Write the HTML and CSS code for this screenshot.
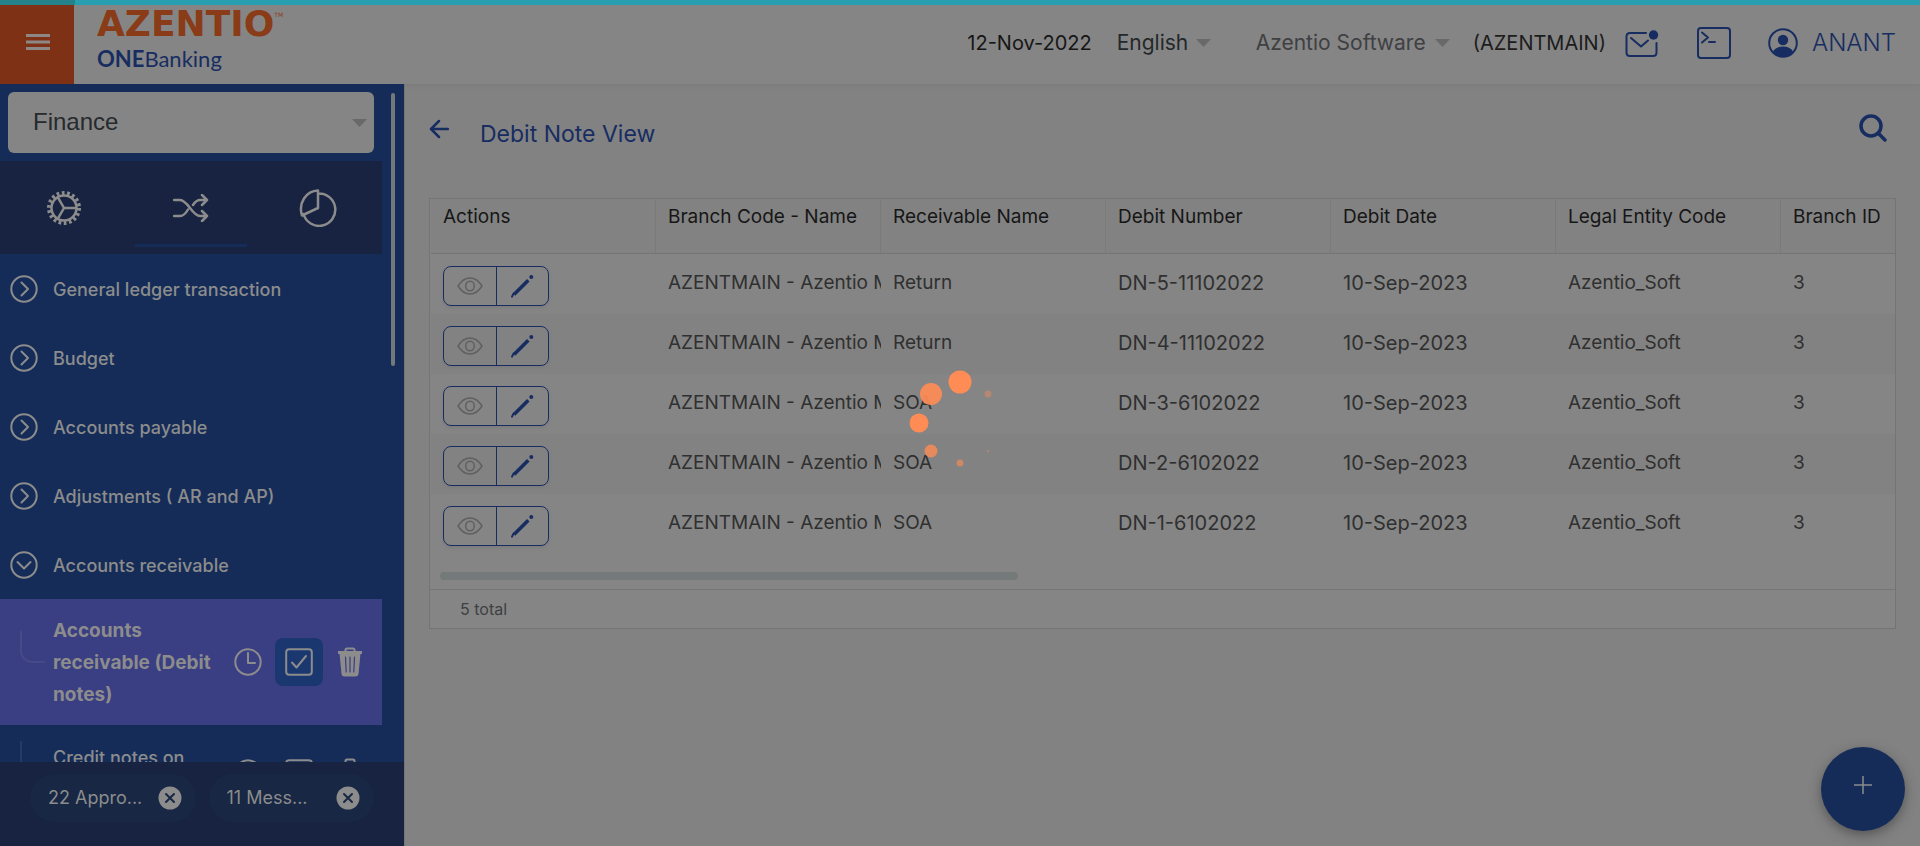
FILE: index.html
```html
<!DOCTYPE html>
<html lang="en">
<head>
<meta charset="utf-8">
<title>Debit Note View</title>
<link rel="stylesheet" href="styles.css">
</head>
<body>
<svg class="defs" aria-hidden="true">
  <symbol id="right" viewBox="0 0 28 28"><circle cx="14" cy="14" r="12.7"/><path d="M11.500 7.500l6.500 6.500-6.500 6.500"/></symbol>
  <symbol id="down" viewBox="0 0 28 28"><circle cx="14" cy="14" r="12.7"/><path d="M7.500 11l6.500 6.500 6.500-6.500"/></symbol>
  <symbol id="clock" viewBox="0 0 28 28"><circle cx="14" cy="14" r="12.7"/><path d="M14 5v10h7"/></symbol>
  <symbol id="check" viewBox="0 0 28 28"><rect x="1.200" y="1.200" width="25.600" height="25.600" rx="3"/><path d="M7 14.500l4.500 5L21 8"/></symbol>
  <symbol id="trash" viewBox="0 0 26 30"><path class="solid" d="M1 4h24v3H1zM2.500 6.500h21L21.500 27q-.3 2.500-3 2.500h-11q-2.700 0-3-2.500z"/><path d="M8.500 4.500V3q0-1.500 1.500-1.500h6q1.500 0 1.500 1.500v1.500"/><path class="slots" d="M8.500 10l.7 15M13 10v15M17.500 10l-.7 15"/></symbol>
  <symbol id="eye" viewBox="0 0 26 18"><path d="M1 9Q6 1 13 1t12 8q-5 8-12 8T1 9z"/><ellipse cx="13" cy="9" rx="4.300" ry="4.800"/></symbol>
  <symbol id="pen" viewBox="0 0 24 24"><path class="stem" d="M4 20.500L18.300 6.200"/><path d="M2 22.600l1.500-3"/><circle class="solid" cx="21.300" cy="2.900" r="2"/></symbol>
  <symbol id="close" viewBox="0 0 24 24"><circle class="solid" cx="12" cy="12" r="11.500"/><path class="cross" d="M8 8l8 8M16 8l-8 8"/></symbol>
</svg>

<header class="topbar">
  <button class="burger" aria-label="Menu"><svg width="24" height="18" viewBox="0 0 24 18"><path d="M0 2.500h24M0 9h24M0 15.500h24"/></svg></button>
  <div class="brand">
    <div class="brand-name">AZENTIO<span class="tm">TM</span></div>
    <div class="brand-sub"><b>ONE</b>Banking</div>
  </div>
  <div class="tools">
    <span class="date">12-Nov-2022</span>
    <select class="pick language" aria-label="Language"><option>English</option></select>
    <select class="pick company" aria-label="Company"><option>Azentio Software</option></select>
    <span class="branch">(AZENTMAIN)</span>
    <button class="icon-btn mail" aria-label="Messages"><svg width="34" height="28" viewBox="0 0 34 28"><path d="M21 3H5Q1.500 3 1.500 6.500v16Q1.500 26 5 26h23q3.500 0 3.500-3.500V13M6 8l10 8.500 7-6"/><circle class="solid" cx="28.500" cy="5" r="4.700"/></svg></button>
    <button class="icon-btn terminal" aria-label="Console"><svg width="34" height="32" viewBox="0 0 34 32"><rect x="1" y="1" width="32" height="30" rx="3"/><path d="M5 5.500l6 5-6 5M12 15h6"/></svg></button>
    <a class="user" href="#"><svg width="30" height="30" viewBox="0 0 30 30"><circle cx="15" cy="15" r="13.800"/><circle class="solid" cx="15" cy="12" r="5.200"/><path class="solid" d="M5 23.500q3-5 10-5t10 5q-4 5.300-10 5.300t-10-5.300z"/></svg>ANANT</a>
  </div>
</header>

<div class="body">
  <aside class="sidebar">
    <div class="scroll-area">
      <div class="menu">
        <div class="module-box"><select class="module" aria-label="Module"><option>Finance</option></select></div>
        <div class="tabs">
          <button class="tab" aria-label="Settings"><svg width="34" height="34" viewBox="0 0 34 34"><circle class="teeth" cx="17" cy="17" r="15"/><circle class="ring" cx="17" cy="17" r="12.500"/><path class="ring" d="M17 17h12M17 17L11 6.600M17 17L11 27.400"/></svg></button>
          <button class="tab active" aria-label="Transactions"><svg width="36" height="28" viewBox="0 0 36 28"><path d="M1 6h6c8 0 12 16 20 16h7M1 22h6c3.500 0 6-3 8-6.500M20 11c2-3 4-5 7-5h7M29 1l5 5-5 5M29 17l5 5-5 5"/></svg></button>
          <button class="tab" aria-label="Reports"><svg width="38" height="38" viewBox="0 0 38 38"><path d="M19 4.500A16.200 16.200 0 1 1 4.500 25M19 1.500V19L3 26.500C-1 14 7 2 19 1.500z"/></svg></button>
        </div>
        <nav>
          <a class="node" href="#"><svg class="mark"><use href="#right"/></svg><span>General ledger transaction</span></a>
          <a class="node" href="#"><svg class="mark"><use href="#right"/></svg><span>Budget</span></a>
          <a class="node" href="#"><svg class="mark"><use href="#right"/></svg><span>Accounts payable</span></a>
          <a class="node" href="#"><svg class="mark"><use href="#right"/></svg><span>Adjustments ( AR and AP)</span></a>
          <a class="node" href="#"><svg class="mark"><use href="#down"/></svg><span>Accounts receivable</span></a>
          <div class="leaf current">
            <span class="branch-line"></span>
            <a class="leaf-name" href="#">Accounts receivable (Debit notes)</a>
            <button class="act" aria-label="History"><svg class="mark"><use href="#clock"/></svg></button>
            <button class="act on" aria-label="Approve"><svg class="mark"><use href="#check"/></svg></button>
            <button class="act" aria-label="Delete"><svg class="bin"><use href="#trash"/></svg></button>
          </div>
          <div class="leaf">
            <span class="branch-line"></span>
            <a class="leaf-name" href="#">Credit notes on</a>
            <button class="act" aria-label="History"><svg class="mark"><use href="#clock"/></svg></button>
            <button class="act" aria-label="Approve"><svg class="mark"><use href="#check"/></svg></button>
            <button class="act" aria-label="Delete"><svg class="bin"><use href="#trash"/></svg></button>
          </div>
        </nav>
      </div>
      <span class="thumb"></span>
    </div>
    <div class="chips">
      <div class="chip"><span>22 Appro...</span><button aria-label="Dismiss approvals"><svg width="24" height="24"><use href="#close"/></svg></button></div>
      <div class="chip"><span>11 Mess...</span><button aria-label="Dismiss messages"><svg width="24" height="24"><use href="#close"/></svg></button></div>
    </div>
  </aside>

  <main class="content">
    <div class="heading">
      <button class="back" aria-label="Back"><svg width="20" height="20" viewBox="0 0 20 20"><path d="M19 10H2M10 2l-8 8 8 8"/></svg></button>
      <h1>Debit Note View</h1>
      <button class="search" aria-label="Search"><svg width="28" height="28" viewBox="0 0 28 28"><circle cx="12" cy="12" r="10"/><path d="M19.500 19.500l6.500 6.500"/></svg></button>
    </div>
    <section class="grid">
      <div class="grid-view">
        <table>
          <thead><tr><th>Actions</th><th>Branch Code - Name</th><th>Receivable Name</th><th>Debit Number</th><th>Debit Date</th><th>Legal Entity Code</th><th>Branch ID</th></tr></thead>
          <tbody>
            <tr><td><div class="pair"><button aria-label="View"><svg class="eye"><use href="#eye"/></svg></button><button aria-label="Edit"><svg class="pen"><use href="#pen"/></svg></button></div></td><td>AZENTMAIN - Azentio Main</td><td>Return</td><td class="num">DN-5-11102022</td><td class="num">10-Sep-2023</td><td>Azentio_Soft</td><td>3</td></tr>
            <tr><td><div class="pair"><button aria-label="View"><svg class="eye"><use href="#eye"/></svg></button><button aria-label="Edit"><svg class="pen"><use href="#pen"/></svg></button></div></td><td>AZENTMAIN - Azentio Main</td><td>Return</td><td class="num">DN-4-11102022</td><td class="num">10-Sep-2023</td><td>Azentio_Soft</td><td>3</td></tr>
            <tr><td><div class="pair"><button aria-label="View"><svg class="eye"><use href="#eye"/></svg></button><button aria-label="Edit"><svg class="pen"><use href="#pen"/></svg></button></div></td><td>AZENTMAIN - Azentio Main</td><td>SOA</td><td class="num">DN-3-6102022</td><td class="num">10-Sep-2023</td><td>Azentio_Soft</td><td>3</td></tr>
            <tr><td><div class="pair"><button aria-label="View"><svg class="eye"><use href="#eye"/></svg></button><button aria-label="Edit"><svg class="pen"><use href="#pen"/></svg></button></div></td><td>AZENTMAIN - Azentio Main</td><td>SOA</td><td class="num">DN-2-6102022</td><td class="num">10-Sep-2023</td><td>Azentio_Soft</td><td>3</td></tr>
            <tr><td><div class="pair"><button aria-label="View"><svg class="eye"><use href="#eye"/></svg></button><button aria-label="Edit"><svg class="pen"><use href="#pen"/></svg></button></div></td><td>AZENTMAIN - Azentio Main</td><td>SOA</td><td class="num">DN-1-6102022</td><td class="num">10-Sep-2023</td><td>Azentio_Soft</td><td>3</td></tr>
          </tbody>
        </table>
      </div>
      <div class="track"><div class="track-thumb"></div></div>
      <div class="total">5 total</div>
    </section>
  </main>
</div>

<button class="fab" aria-label="Add"><svg width="18" height="18" viewBox="0 0 18 18"><path d="M9 0v18M0 9h18"/></svg></button>
<div class="progress"><div class="progress-start"></div></div>
<div class="loading" role="status" aria-label="Loading">
  <svg width="106" height="106" viewBox="-53 -53 106 106"><circle cy="-41" r="11.500"/><circle cx="-29" cy="-29" r="11" opacity=".92"/><circle cx="-41" r="9.500"/><circle cx="-29" cy="28" r="6.500" opacity=".8"/><circle cy="40" r="3.500" opacity=".6"/><circle cx="28" cy="28" r="1" opacity=".5"/><circle cx="28" cy="-29" r="3.500" opacity=".4"/></svg>
</div>
</body>
</html>
```
FILE: styles.css
```css
* { box-sizing: border-box; }
html, body { height: 100%; }
body {
  margin: 0;
  display: flex;
  flex-direction: column;
  overflow: hidden;
  background: #828282;
  color: #1c1c1c;
  font: 20px/24px Inter, "Liberation Sans", sans-serif;
}
button, select { font: inherit; color: inherit; background: none; border: 0; padding: 0; margin: 0; }
button { display: flex; align-items: center; justify-content: center; }
a { color: inherit; text-decoration: none; }
svg { display: block; flex: none; fill: none; stroke: currentColor; stroke-width: 2; stroke-linecap: round; stroke-linejoin: round; }
.solid { fill: currentColor; stroke: none; }
.defs { position: absolute; width: 0; height: 0; }

/* top bar */
.topbar { flex: none; display: flex; height: 84px; background: #858585; box-shadow: 0 1px 4px #7b7b7b; }
.burger { width: 74px; padding-left: 2px; background: #7f3116; color: #8d8885; }
.burger svg { stroke-linecap: butt; stroke-width: 3; }
.brand { padding: 9px 0 0 23px; }
.brand-name { display: flex; font: 700 36px/30px "DejaVu Sans", sans-serif; color: #8a3b17; }
.tm { font-size: 6px; line-height: 12px; font-weight: 400; }
.brand-sub { font: 22px/32px Lato, sans-serif; color: #172d61; padding-top: 4px; }
.tools { flex: 1; display: flex; align-items: center; justify-content: flex-end; padding: 1px 24px 0 0; }
.pick, .module { appearance: none; background: url("data:image/svg+xml,%3Csvg xmlns='http://www.w3.org/2000/svg' width='15' height='8'%3E%3Cpath d='M0 0h15L7.500 8z' fill='%23696969'/%3E%3C/svg%3E") right center no-repeat; }
.pick { height: 32px; font-size: 21px; line-height: 32px; }
.date { color: #161616; }
.language { width: 94px; margin-left: 25px; color: #23282b; }
.company { width: 194px; margin-left: 45px; color: #3e4042; }
.branch { margin-left: 23px; }
.icon-btn, .user { color: #172d61; }
.mail { margin-left: 19px; padding-top: 2px; }
.terminal { margin-left: 38px; }
.user { display: flex; align-items: center; gap: 14px; margin-left: 37px; font-size: 24px; font-weight: 300; }

.body { flex: 1; min-height: 0; display: flex; }

/* sidebar */
.sidebar { flex: none; width: 405px; display: flex; flex-direction: column; background: #152c59; border-right: 1px solid #757575; color: #8c8c8c; font-size: 18px; }
.scroll-area { flex: 1; min-height: 0; display: flex; overflow: hidden; }
.menu { width: 382px; }
.thumb { width: 4px; height: 273px; margin: 9px 0 0 9px; border-radius: 2px; background: #747979; }
.module-box { padding: 8px; }
.module { display: block; width: 100%; height: 61px; padding: 0 25px 2px; border-radius: 6px; background-color: #858585; background-position: right 7px center; color: #262a2c; font: 24px/32px "Liberation Sans", Arial, sans-serif; }
.tabs { display: grid; grid-template-columns: repeat(3, 1fr); height: 93px; background: #172340; }
.tab { position: relative; }
.tab svg { stroke-width: 2.500; }
.tab.active::after { content: ""; position: absolute; left: 8px; right: 8px; bottom: 7px; height: 3px; background: #152c59; }
.teeth { stroke-width: 4; stroke-linecap: butt; stroke-dasharray: 2.700 2.536; }
.node { display: flex; align-items: center; gap: 15px; height: 69px; padding-left: 10px; font-weight: 500; }
.node span { padding-top: 2px; }
.mark { width: 28px; height: 28px; stroke-width: 2; }
.bin { width: 26px; height: 30px; }
.slots { stroke: #3a3e83; stroke-width: 1.200; }
.leaf { display: grid; grid-template-columns: 53px 1fr 48px 48px 48px; column-gap: 3px; align-items: center; height: 126px; padding-right: 8px; font-weight: 500; }
.leaf.current { background: #3a3e83; font-size: 19px; font-weight: 700; }
.branch-line { width: 25px; height: 32px; margin-left: 20px; align-self: start; margin-top: 32px; border: solid #464a86; border-width: 0 0 2px 2px; border-bottom-left-radius: 12px; }
.leaf:not(.current) .branch-line { margin-top: 16px; height: 48px; border-color: #263a63; }
.leaf-name { line-height: 32px; margin-left: -3px; padding-top: 2px; }
.leaf:not(.current) .leaf-name { align-self: start; padding-top: 17px; }
.act { width: 48px; height: 48px; border-radius: 8px; }
.act.on { background: #1b376f; }
.leaf:not(.current) .act { align-self: start; margin-top: 24px; }
.chips { flex: none; display: flex; gap: 13px; height: 84px; padding: 12px 30px 24px; background: #172340; }
.chip { flex: 1; display: flex; align-items: center; justify-content: space-between; padding: 0 14px 0 18px; border-radius: 24px; background: #172744; }
.cross { stroke: #172744; }

/* content */
.content { flex: 1; min-width: 0; padding: 24px 24px 0; }
.heading { display: flex; align-items: center; height: 50px; margin-bottom: 40px; color: #172d61; }
h1 { flex: 1; margin: 0 0 0 31px; padding-top: 2px; font-size: 23px; line-height: 32px; font-weight: 400; }
.back { align-self: flex-start; margin-top: 11px; }
.back svg { stroke-width: 2.500; }
.search { align-self: flex-start; margin: 6px 9px 0 0; }
.search svg { stroke-width: 3.500; }
.grid { border: 1px solid #747474; background: #858585; }
.grid-view { overflow: hidden; padding-left: 1px; }
table { width: 1575px; table-layout: fixed; border-collapse: separate; border-spacing: 0; font-size: 19px; }
th, td { text-align: left; white-space: nowrap; overflow: hidden; padding: 0 0 0 12px; }
th { height: 55px; padding-bottom: 18px; font-weight: 400; color: #161616; border-bottom: 1px solid #747474; border-right: 1px solid #7a7a7a; background: #828282; }
td { height: 60px; padding-bottom: 2px; color: #303030; }
td:first-child { padding: 4px 0 0 12px; }
.num { font-size: 20px; }
tbody tr:nth-child(even) { background: #828282; }
.pair { display: flex; width: 106px; height: 40px; border: 1px solid #172d61; border-radius: 8px; box-shadow: 0 2px 3px #7c7c7c; }
.pair button { flex: 1; }
.pair button + button { border-left: 1px solid #172d61; color: #172d61; }
.eye { width: 26px; height: 18px; color: #606060; stroke-width: 1.500; }
.pen { width: 24px; height: 24px; }
.stem { stroke-width: 3.600; stroke-linecap: butt; }
.track { padding: 18px 10px 9px; border-bottom: 1px solid #767676; }
.track-thumb { width: 40%; height: 8px; border-radius: 4px; background: #747a7a; }
.total { padding: 0 30px; font-size: 16px; line-height: 38px; color: #3e4042; }

.fab { position: fixed; right: 15px; bottom: 15px; width: 84px; height: 84px; padding-bottom: 8px; border-radius: 50%; background: #152c59; color: #8c8c8c; box-shadow: 0 4px 12px #555; }
.fab svg { stroke-width: 1.500; stroke-linecap: butt; }
.progress { position: fixed; top: 0; left: 0; right: 0; height: 5px; background: #279fb0; }
.progress-start { width: 75px; height: 5px; background: #24838a; }
.loading { position: fixed; inset: 0; display: flex; align-items: center; justify-content: center; pointer-events: none; }
.loading circle { fill: #ff8c55; stroke: none; }
```
